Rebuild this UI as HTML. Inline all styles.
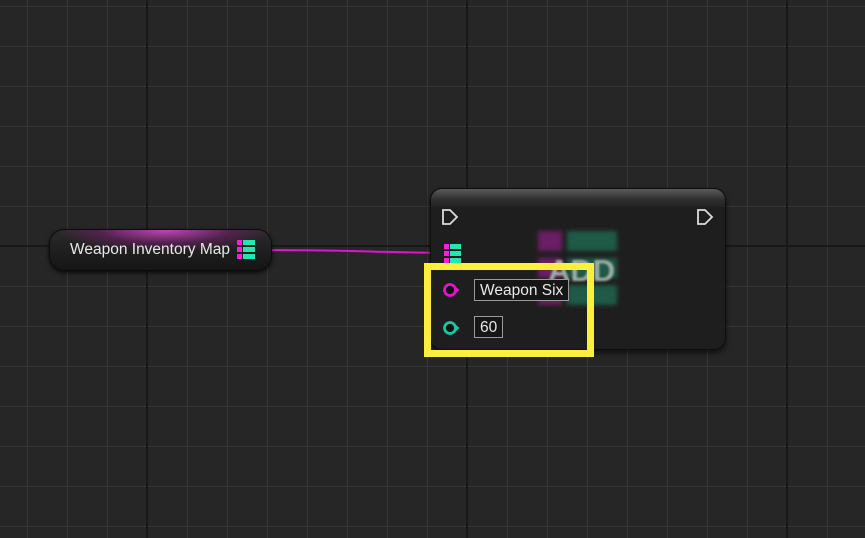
<!DOCTYPE html>
<html><head><meta charset="utf-8"><style>
html,body{margin:0;padding:0}
body{width:865px;height:538px;overflow:hidden;position:relative;background-color:#262626;
font-family:"Liberation Sans",sans-serif;
background-image:
linear-gradient(to right, transparent 146px, #181818 146px, #181818 148px, transparent 148px),
linear-gradient(to right, transparent 466px, #181818 466px, #181818 468px, transparent 468px),
linear-gradient(to right, transparent 786px, #181818 786px, #181818 788px, transparent 788px),
linear-gradient(to bottom, transparent 245px, #181818 245px, #181818 247px, transparent 247px),
linear-gradient(to right, #363636 1px, transparent 1px),
linear-gradient(to bottom, #363636 1px, transparent 1px);
background-size:865px 538px,865px 538px,865px 538px,865px 538px,40px 40px,40px 40px;
background-position:0 0,0 0,0 0,0 0,27px 0,0 6px;
background-repeat:no-repeat,no-repeat,no-repeat,no-repeat,repeat,repeat;}
.abs{position:absolute}
.var{left:49px;top:229px;width:223px;height:42px;border-radius:15px;border:1px solid #0c0c0c;box-sizing:border-box;
background:radial-gradient(ellipse 110px 22px at 115px 0px, rgba(200,70,190,0.95), rgba(120,30,110,0.5) 60%, transparent 100%), linear-gradient(#2a2a2a,#151515);
box-shadow:0 2px 4px rgba(0,0,0,.7)}
.var span{position:absolute;left:20px;top:11px;color:#e8e8e8;font-size:15.5px}
.node{left:430px;top:188px;width:296px;height:162px;border-radius:12px;background:#1e1e1e;border:1px solid #0e0e0e;box-sizing:border-box;box-shadow:0 3px 6px rgba(0,0,0,.6);overflow:hidden}
.hdr{position:absolute;left:0;top:0;right:0;height:18px;background:linear-gradient(#5a5a5a,#2e2e2e 60%,#222)}
.box{position:absolute;border:1px solid #9a9a9a;color:#e8e8e8;font-size:15.5px;background:#161616;padding:0 5px;height:22px;line-height:22px;box-sizing:border-box}
</style></head><body>
<svg class="abs" style="left:0;top:0" width="865" height="538">
<path d="M262 250 C350 250 360 252 446 253" stroke="#e014d0" stroke-width="2" fill="none"/>
</svg>
<div class="abs var"><span>Weapon Inventory Map</span></div>
<svg class="abs" style="left:237px;top:240px" width="20" height="20">
<rect x="0" y="0" width="5" height="5" fill="#ff1ae0"/><rect x="0" y="7" width="5" height="5" fill="#ff1ae0"/><rect x="0" y="14" width="5" height="5" fill="#ff1ae0"/>
<rect x="6" y="0" width="12" height="5" fill="#20e8b0"/><rect x="6" y="7" width="12" height="5" fill="#20e8b0"/><rect x="6" y="14" width="12" height="5" fill="#20e8b0"/>
</svg>
<div class="abs node"><div class="hdr"></div>
<div style="position:absolute;left:107px;top:42px;width:24px;height:74px;filter:blur(2px)">
<div style="height:20px;background:#6a1e64;margin-bottom:7px"></div><div style="height:20px;background:#6a1e64;margin-bottom:7px"></div><div style="height:20px;background:#6a1e64"></div></div>
<div style="position:absolute;left:136px;top:42px;width:50px;height:74px;filter:blur(2px)">
<div style="height:20px;background:#1f5a47;margin-bottom:7px"></div><div style="height:20px;background:#1f5a47;margin-bottom:7px"></div><div style="height:20px;background:#1f5a47"></div></div>
<div style="position:absolute;left:117px;top:64px;font-size:31px;font-weight:bold;color:#9eaea6;filter:blur(1px)">ADD</div>
</div>
<svg class="abs" style="left:430px;top:188px" width="296" height="162">
<path d="M13 22 h7 l7 7 l-7 7 h-7 z" stroke="#dcdcdc" stroke-width="1.8" fill="none"/>
<path d="M268 22 h7 l7 7 l-7 7 h-7 z" stroke="#dcdcdc" stroke-width="1.8" fill="none"/>
<rect x="14" y="56" width="5" height="5" fill="#ff1ae0"/><rect x="14" y="63" width="5" height="5" fill="#ff1ae0"/><rect x="14" y="70" width="5" height="5" fill="#ff1ae0"/>
<rect x="20" y="56" width="11" height="5" fill="#20e8b0"/><rect x="20" y="63" width="11" height="5" fill="#20e8b0"/><rect x="20" y="70" width="11" height="5" fill="#20e8b0"/>
<circle cx="20" cy="102" r="5.5" stroke="#e014c8" stroke-width="2.8" fill="#111"/><path d="M25.5 98.5 l4 3.5 l-4 3.5z" fill="#e014c8"/>
<circle cx="20" cy="140" r="5.5" stroke="#16c9a0" stroke-width="2.8" fill="#111"/><path d="M25.5 136.5 l4 3.5 l-4 3.5z" fill="#16c9a0"/>
</svg>
<div class="abs box" style="left:474px;top:279px">Weapon Six</div>
<div class="abs box" style="left:474px;top:316px">60</div>
<div class="abs" style="left:424px;top:263px;width:170px;height:94px;border:7px solid #fbee3c;box-sizing:border-box"></div>
</body></html>
